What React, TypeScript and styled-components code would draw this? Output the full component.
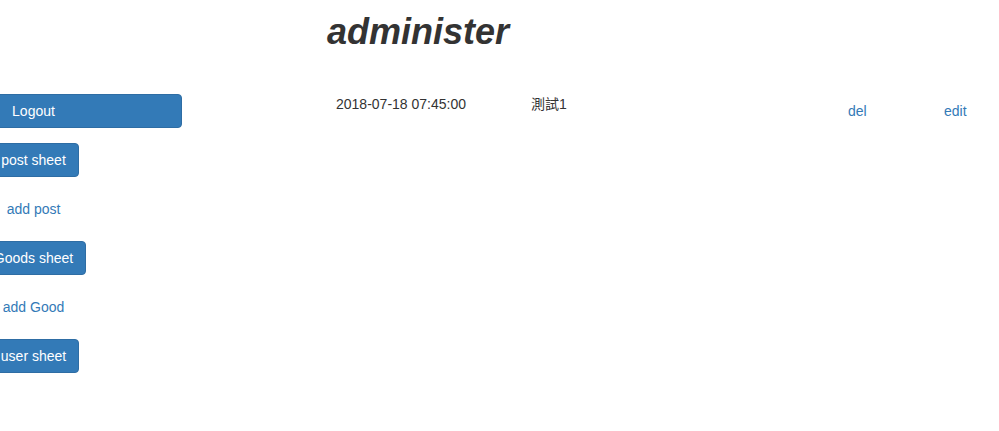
import React from "react";
import styled, { createGlobalStyle } from "styled-components";

const Global = createGlobalStyle`
  html, body { margin: 0; padding: 0; background: #fff; }
  body {
    font-family: "Liberation Sans", Arial, "Noto Sans CJK TC", sans-serif;
    font-size: 14px;
    line-height: 1.42857143;
    color: #333;
    overflow: hidden;
  }
`;

const Page = styled.div`
  display: flex;
  align-items: flex-start;
  width: 999px;
  height: 431px;
`;

const Sidebar = styled.nav`
  flex: 0 0 297px;
  margin-left: -115px;
  padding-top: 94px;
  display: flex;
  flex-direction: column;
  align-items: center;
  gap: 15px;
`;

const Button = styled.a<{ $block?: boolean }>`
  display: inline-block;
  box-sizing: border-box;
  ${(p) => (p.$block ? "align-self: stretch;" : "")}
  padding: 6px 12px;
  font-size: 14px;
  line-height: 20px;
  text-align: center;
  white-space: nowrap;
  color: #fff;
  background-color: #337ab7;
  border: 1px solid #2e6da4;
  border-radius: 4px;
  text-decoration: none;
  cursor: pointer;
`;

const LinkButton = styled.a`
  display: inline-block;
  padding: 7px 12px;
  font-size: 14px;
  line-height: 20px;
  color: #337ab7;
  text-decoration: none;
  white-space: nowrap;
  cursor: pointer;
`;

const Main = styled.main`
  margin-left: 146px;
  flex: 0 0 659px;
`;

const Title = styled.h1`
  margin: 12px 0 34px -1px;
  font-family: "Liberation Sans", Arial, sans-serif;
  font-size: 36px;
  font-weight: 700;
  font-style: italic;
  line-height: 1.1;
  color: #333;
`;

const Table = styled.table`
  width: 659px;
  border-collapse: collapse;
  table-layout: fixed;
`;

const Col = styled.col<{ $w: number }>`
  width: ${(p) => p.$w}px;
`;

const Cell = styled.td`
  box-sizing: border-box;
  padding: 8px;
  vertical-align: top;
  line-height: 20px;
`;

const ActionCell = styled.td`
  box-sizing: border-box;
  padding: 8px;
  vertical-align: top;
`;

export default function App() {
  return (
    <>
      <Global />
      <Page>
        <Sidebar>
          <Button $block>Logout</Button>
          <Button>post sheet</Button>
          <LinkButton>add post</LinkButton>
          <Button>Goods sheet</Button>
          <LinkButton>add Good</LinkButton>
          <Button>user sheet</Button>
        </Sidebar>
        <Main>
          <Title>administer</Title>
          <Table>
            <colgroup>
              <Col $w={195} />
              <Col $w={305} />
              <Col $w={96} />
              <Col $w={63} />
            </colgroup>
            <tbody>
              <tr>
                <Cell>2018-07-18 07:45:00</Cell>
                <Cell>測試1</Cell>
                <ActionCell>
                  <LinkButton>del</LinkButton>
                </ActionCell>
                <ActionCell>
                  <LinkButton>edit</LinkButton>
                </ActionCell>
              </tr>
            </tbody>
          </Table>
        </Main>
      </Page>
    </>
  );
}
